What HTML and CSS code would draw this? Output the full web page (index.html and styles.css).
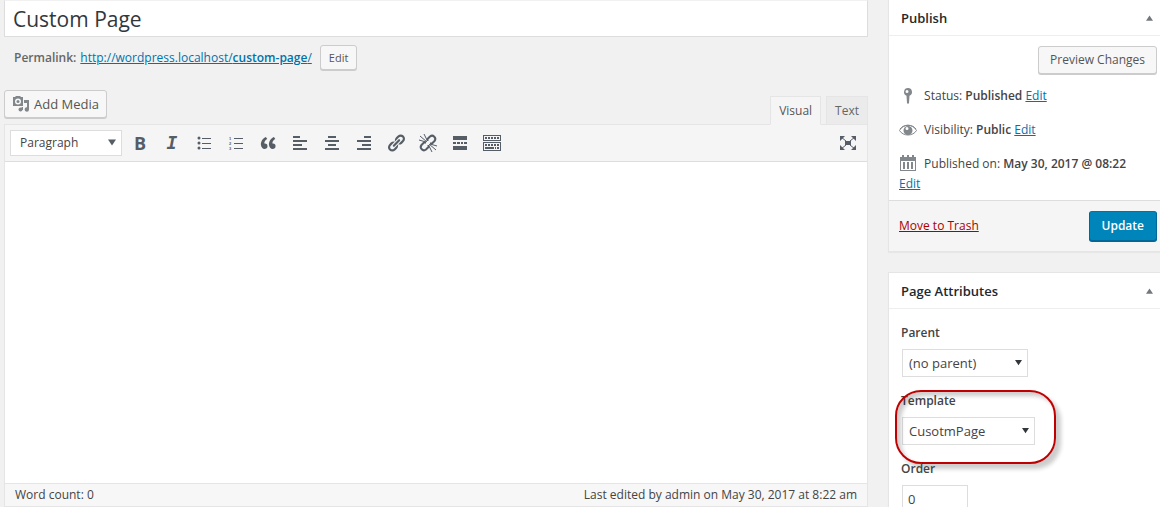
FILE: index.html
```
<!DOCTYPE html>
<html lang="en">
<head>
    <meta charset="UTF-8">
    <meta name="viewport" content="width=device-width, initial-scale=1.0">
    <title>Edit Page</title>
    <link rel="stylesheet" href="styles.css">
</head>
<body>
    <form class="page">
        <main class="main">
            <input type="text" class="title" value="Custom Page" aria-label="Title">

            <div class="permalink">
                <strong>Permalink:</strong>
                <a href="#">http://wordpress.localhost/<b>custom-page</b>/</a>
                <button type="button" class="button small">Edit</button>
            </div>

            <div class="editor-tools">
                <button type="button" class="button media">
                    <svg class="icon" viewBox="0 0 18 18">
                        <path fill-rule="evenodd" d="M1 2h2l1-1h4l1 1h2v9H1zM6 3.500a3 3 0 1 0 0 6 3 3 0 0 0 0-6z"/>
                        <circle cx="6" cy="6.500" r="1.500"/>
                        <path d="M12 5h5v9.500a2.200 2.200 0 1 1-2-2.200V8h-3z"/>
                        <circle cx="8.500" cy="14.500" r="2"/>
                        <path d="M9.500 12h1.500v3H9.500z"/>
                    </svg>
                    Add Media
                </button>
                <div class="tabs">
                    <button type="button" class="tab active">Visual</button>
                    <button type="button" class="tab">Text</button>
                </div>
            </div>

            <div class="editor">
                <div class="toolbar">
                    <div class="select format">
                        <select aria-label="Format"><option>Paragraph</option></select>
                        <svg class="arrow" viewBox="0 0 8 6"><path d="M0 0h8L4 6z"/></svg>
                    </div>
                    <button type="button" class="tool bold" aria-label="Bold">B</button>
                    <button type="button" class="tool italic" aria-label="Italic">I</button>
                    <button type="button" class="tool" aria-label="Bulleted list">
                        <svg viewBox="0 0 20 20"><circle cx="5" cy="5" r="1.500"/><circle cx="5" cy="10" r="1.500"/><circle cx="5" cy="15" r="1.500"/><path d="M8 5h9v1H8zM8 10h9v1H8zM8 15h9v1H8z"/></svg>
                    </button>
                    <button type="button" class="tool" aria-label="Numbered list">
                        <svg viewBox="0 0 20 20"><text x="3" y="7">1</text><text x="3" y="12">2</text><text x="3" y="17">3</text><path d="M8 5h9v1H8zM8 10h9v1H8zM8 15h9v1H8z"/></svg>
                    </button>
                    <button type="button" class="tool" aria-label="Blockquote">
                        <svg viewBox="0 0 20 20"><path d="M9.490 13.220c0-.740-.200-1.380-.610-1.900-.620-.780-1.830-.880-2.530-.720-.290-1.650 1.110-3.750 2.920-4.650L7.880 4c-2.730 1.300-5.420 4.280-4.960 8.050C3.210 14.430 4.590 16 6.540 16c.850 0 1.560-.250 2.120-.750s.830-1.180.830-2.030zm8.050 0c0-.740-.200-1.380-.610-1.900-.630-.780-1.830-.880-2.530-.720-.290-1.650 1.110-3.750 2.920-4.650L15.930 4c-2.730 1.300-5.410 4.280-4.950 8.050.290 2.380 1.660 3.950 3.610 3.950.850 0 1.560-.250 2.120-.750s.830-1.180.830-2.030z"/></svg>
                    </button>
                    <button type="button" class="tool" aria-label="Align left">
                        <svg viewBox="0 0 20 20"><path d="M3 3h7v2H3zM3 7h14v2H3zM3 11h9v2H3zM3 15h14v2H3z"/></svg>
                    </button>
                    <button type="button" class="tool" aria-label="Align center">
                        <svg viewBox="0 0 20 20"><path d="M6 3h8v2H6zM3 7h14v2H3zM6 11h8v2H6zM3 15h14v2H3z"/></svg>
                    </button>
                    <button type="button" class="tool" aria-label="Align right">
                        <svg viewBox="0 0 20 20"><path d="M10 3h7v2h-7zM3 7h14v2H3zM8 11h9v2H8zM3 15h14v2H3z"/></svg>
                    </button>
                    <button type="button" class="tool" aria-label="Insert link">
                        <svg viewBox="0 0 20 20"><path d="M17.740 2.760c1.680 1.690 1.680 4.410 0 6.100l-1.530 1.520c-1.120 1.120-2.700 1.470-4.140 1.090l2.620-2.610.760-.770.760-.760c.840-.840.840-2.200 0-3.040-.840-.850-2.200-.850-3.040 0l-.770.760-3.380 3.380c-.370-1.440-.020-3.020 1.100-4.140l1.520-1.530c1.690-1.680 4.420-1.680 6.100 0zM8.590 13.430l5.340-5.340c.420-.420.420-1.100 0-1.520-.440-.430-1.130-.390-1.530 0l-5.330 5.340c-.420.420-.420 1.100 0 1.520.440.430 1.130.390 1.520 0zm-.760 2.290l4.140-4.150c.380 1.440.030 3.020-1.090 4.140l-1.520 1.530c-1.690 1.680-4.410 1.680-6.100 0-1.680-1.680-1.680-4.420 0-6.100l1.530-1.520c1.120-1.120 2.700-1.470 4.140-1.100l-4.140 4.150c-.850.840-.850 2.200 0 3.050.840.840 2.200.840 3.040 0z"/></svg>
                    </button>
                    <button type="button" class="tool" aria-label="Remove link">
                        <svg viewBox="0 0 20 20">
                            <path class="line" d="M9.500 8V6l2.500-2.500a3.200 3.200 0 0 1 4.500 4.500L14 10.500h-2M10.500 12v2L8 16.500A3.200 3.200 0 0 1 3.500 12L6 9.500h2"/>
                            <path class="thin" d="M2 3l7 6M6 1l3 6M1 7l7 2M11 11l7 6M11 13l3 6M12 11l7 2"/>
                        </svg>
                    </button>
                    <button type="button" class="tool" aria-label="Read more">
                        <svg viewBox="0 0 20 20"><path d="M3 3h14v4H3zM3 13h14v4H3zM3 9h3v2H3zM7 9h3v2H7zM11 9h2v2h-2zM14 9h3v2h-3z"/></svg>
                    </button>
                    <button type="button" class="tool" aria-label="Toolbar toggle">
                        <svg viewBox="0 0 20 20">
                            <path fill-rule="evenodd" d="M1 2h18v6H1zM2 3v4h16V3zM1 9h18v9H1zM2 10v7h16v-7z"/>
                            <path d="M3 4h2v2H3zM6 4h2v2H6zM9 4h2v2H9zM12 4h2v2h-2zM15 4h2v2h-2zM3 11h2v2H3zM6 11h2v2H6zM9 11h2v2H9zM12 11h2v2h-2zM15 11h2v2h-2zM3 14h9v2H3zM13 14h1v2h-1zM15 14h2v2h-2z"/>
                        </svg>
                    </button>
                    <button type="button" class="tool fullscreen" aria-label="Distraction-free writing">
                        <svg viewBox="0 0 20 20">
                            <path d="M7 8h6v4H7zM2 3h5L2 8zM18 3v5l-5-5zM2 17v-5l5 5zM18 17h-5l5-5z"/>
                            <path class="thin" d="M3 4l5 4M17 4l-5 4M3 16l5-4M17 16l-5-4"/>
                        </svg>
                    </button>
                </div>
                <textarea class="content" aria-label="Content"></textarea>
                <div class="status">
                    <span>Word count: 0</span>
                    <span>Last edited by admin on May 30, 2017 at 8:22 am</span>
                </div>
            </div>
        </main>

        <aside class="side">
            <section class="box publish">
                <div class="box-header">
                    <h2>Publish</h2>
                    <svg class="toggle" viewBox="0 0 8 6"><path d="M4 0l4 6H0z"/></svg>
                </div>
                <div class="preview">
                    <button type="button" class="button">Preview Changes</button>
                </div>
                <div class="misc">
                    <p>
                        <svg class="icon" viewBox="0 0 20 20"><path fill-rule="evenodd" d="M9 2a4 4 0 0 1 1.500 7.700L10 17l-1 1-1-1-.500-7.300A4 4 0 0 1 9 2zM8 4a1.500 1.500 0 1 0 0 3 1.500 1.500 0 0 0 0-3z"/></svg>
                        Status: <b>Published</b> <a href="#">Edit</a>
                    </p>
                    <p>
                        <svg class="icon" viewBox="0 0 20 20">
                            <path class="thin" d="M.500 10.500C4 3.500 14 3.500 17.500 10.500 14 16.500 4 16.500.500 10.500z"/>
                            <path class="thin" d="M1 9C5 4 13 4 17 9"/>
                            <path fill-rule="evenodd" d="M9 6a4.500 4.500 0 1 1 0 9 4.500 4.500 0 0 1 0-9zM8 7a1.500 1.500 0 1 0 0 3 1.500 1.500 0 0 0 0-3z"/>
                        </svg>
                        Visibility: <b>Public</b> <a href="#">Edit</a>
                    </p>
                    <p>
                        <svg class="icon" viewBox="0 0 20 20"><path fill-rule="evenodd" d="M1 3h2V1h2v2h3V1h2v2h3V1h2v2h2v14H1zM2 7v9h14V7zM4 8h2v7H4zM8 8h2v7H8zM12 8h2v7h-2z"/></svg>
                        Published on: <b>May 30, 2017 @ 08:22</b> <a href="#">Edit</a>
                    </p>
                </div>
                <div class="actions">
                    <a href="#" class="trash">Move to Trash</a>
                    <button type="submit" class="button primary">Update</button>
                </div>
            </section>

            <section class="box">
                <div class="box-header">
                    <h2>Page Attributes</h2>
                    <svg class="toggle" viewBox="0 0 8 6"><path d="M4 0l4 6H0z"/></svg>
                </div>
                <div class="fields">
                    <div class="field">
                        <label for="parent">Parent</label>
                        <div class="select parent">
                            <select id="parent"><option>(no parent)</option></select>
                            <svg class="arrow" viewBox="0 0 8 6"><path d="M0 0h8L4 6z"/></svg>
                        </div>
                    </div>
                    <div class="field marked">
                        <label for="template">Template</label>
                        <div class="select template">
                            <select id="template"><option>CusotmPage</option></select>
                            <svg class="arrow" viewBox="0 0 8 6"><path d="M0 0h8L4 6z"/></svg>
                        </div>
                    </div>
                    <div class="field">
                        <label for="order">Order</label>
                        <input type="text" id="order" class="order" value="0">
                    </div>
                </div>
            </section>
        </aside>
    </form>
</body>
</html>
```
FILE: styles.css
```
*,
*::after {
    box-sizing: border-box;
}

body {
    margin: 0;
    background-color: #f1f1f1;
    color: #444;
    font-family: "Open Sans", "Noto Sans", sans-serif;
    font-size: 12px;
    line-height: 20px;
    overflow: hidden;
}

button,
input,
select,
textarea {
    font: inherit;
    color: inherit;
}

button {
    cursor: pointer;
}

a {
    color: #0073aa;
}

b,
strong,
label {
    font-weight: 600;
}

svg {
    fill: currentColor;
}

.line,
.thin {
    fill: none;
    stroke: currentColor;
}

.line {
    stroke-width: 2;
}

.icon {
    width: 20px;
    height: 20px;
    color: #82878c;
}

.page {
    display: grid;
    grid-template-columns: 1fr 272px;
    gap: 20px;
    height: 100vh;
    padding-left: 4px;
}

/* Editor column */
.main {
    display: flex;
    flex-direction: column;
    height: 100vh;
    min-width: 0;
}

.title {
    width: 100%;
    height: 37px;
    padding: 0 8px;
    border: 1px solid #ddd;
    border-top-color: #f1f1f1;
    background-color: #fff;
    color: #32373c;
    font-size: 21px;
}

.permalink {
    display: flex;
    align-items: center;
    gap: 4px;
    margin-top: 8px;
    padding-left: 10px;
    color: #666;
}

.button {
    height: 28px;
    padding: 0 11px;
    border: 1px solid #ccc;
    border-radius: 3px;
    background-color: #f7f7f7;
    box-shadow: 0 1px 0 #ccc;
    color: #555;
    line-height: 26px;
    white-space: nowrap;
}

.button.small {
    height: 25px;
    margin-left: 4px;
    padding: 0 8px;
    font-size: 11px;
    line-height: 22px;
}

.button.primary {
    height: 30px;
    padding: 0 12px;
    border-color: #0073aa #006799 #006799;
    background-color: #0085ba;
    box-shadow: 0 1px 0 #006799;
    color: #fff;
    font-weight: 600;
}

.editor-tools {
    display: flex;
    justify-content: space-between;
    align-items: flex-start;
    height: 34px;
    margin-top: 20px;
}

.button.media {
    display: flex;
    align-items: center;
    gap: 4px;
    padding: 0 7px;
    font-size: 13px;
}

.button.media .icon {
    width: 18px;
    height: 18px;
}

.tabs {
    display: flex;
    align-self: flex-end;
    gap: 5px;
    margin-bottom: -1px;
}

.tab {
    position: relative;
    height: 29px;
    padding: 0 8px;
    border: 1px solid #e5e5e5;
    background-color: #ebebeb;
    color: #666;
}

.tab.active {
    border-bottom-color: #f5f5f5;
    background-color: #f5f5f5;
    color: #555;
}

.editor {
    display: flex;
    flex: 1;
    flex-direction: column;
    border: 1px solid #e5e5e5;
}

.toolbar {
    display: flex;
    align-items: center;
    gap: 4px;
    height: 37px;
    padding: 0 5px;
    border-bottom: 1px solid #ddd;
    background-color: #f5f5f5;
}

.select {
    position: relative;
    height: 28px;
}

.select select {
    appearance: none;
    width: 100%;
    height: 100%;
    padding: 0 6px;
    border: 1px solid #ddd;
    border-radius: 0;
    background-color: #fff;
    font-size: 13px;
}

.arrow {
    position: absolute;
    top: 50%;
    right: 6px;
    width: 7px;
    height: 7px;
    margin-top: -4px;
    color: #32373c;
    pointer-events: none;
}

.select.format {
    width: 112px;
    height: 26px;
}

.format select {
    padding: 0 9px;
    font-size: 12px;
}

.format .arrow {
    width: 8px;
    color: #555d66;
}

.tool {
    display: flex;
    justify-content: center;
    align-items: center;
    width: 28px;
    height: 28px;
    padding: 0;
    border: 0;
    background: none;
    color: #555d66;
}

.tool svg {
    width: 20px;
    height: 20px;
}

.tool text {
    font-family: "Liberation Sans", sans-serif;
    font-size: 4px;
    font-weight: 700;
}

.tool.bold {
    font-size: 18px;
    font-weight: 700;
}

.tool.italic {
    font-family: "DejaVu Sans Mono", monospace;
    font-size: 18px;
    font-style: italic;
    font-weight: 700;
}

.tool.fullscreen {
    margin-left: auto;
}

.content {
    flex: 1;
    width: 100%;
    padding: 10px;
    border: 0;
    background-color: #fff;
    resize: none;
}

.status {
    display: flex;
    justify-content: space-between;
    height: 23px;
    padding: 1px 10px;
    border-top: 1px solid #e5e5e5;
    background-color: #f7f7f7;
}

/* Sidebar */
.side {
    display: flex;
    flex-direction: column;
    gap: 20px;
}

.box {
    border: 1px solid #e5e5e5;
    border-right: 0;
    background-color: #fff;
    box-shadow: 0 1px 1px rgba(0, 0, 0, 0.04);
}

.publish {
    border-top: 0;
}

.box-header {
    display: flex;
    justify-content: space-between;
    align-items: center;
    height: 36px;
    padding: 0 7px 0 12px;
    border-bottom: 1px solid #eee;
}

.box-header h2 {
    margin: 0;
    color: #23282d;
    font-size: 13px;
    font-weight: 600;
}

.toggle {
    width: 7px;
    height: 6px;
    color: #72777c;
}

.preview {
    display: flex;
    justify-content: flex-end;
    padding: 10px 3px 12px;
}

.misc {
    padding: 0 10px 6px;
}

.misc p {
    margin: 0 0 14px;
}

.misc p:last-child {
    margin: 0;
}

.misc .icon {
    margin-right: 2px;
    vertical-align: top;
}

.actions {
    display: flex;
    justify-content: space-between;
    align-items: center;
    height: 51px;
    padding: 0 3px 0 10px;
    border-top: 1px solid #ddd;
    background-color: #f5f5f5;
}

.trash {
    color: #a00;
}

.fields {
    display: flex;
    flex-direction: column;
    gap: 14px;
    padding: 14px 12px;
}

.field {
    position: relative;
}

.field label {
    display: block;
    margin-bottom: 6px;
}

.field .select,
.order {
    margin-left: 1px;
}

.select.parent {
    width: 126px;
}

.select.template {
    width: 133px;
}

.order {
    width: 66px;
    height: 28px;
    padding: 0 5px;
    border: 1px solid #ddd;
    background-color: #fff;
    font-size: 13px;
}

/* Red ring around the template field */
.marked::after {
    content: "";
    position: absolute;
    top: -1px;
    left: -6px;
    width: 161px;
    height: 74px;
    border: 2px solid #c00000;
    border-radius: 26px;
    box-shadow: 5px 5px 4px rgba(0, 0, 0, 0.2), inset 4px 4px 4px rgba(0, 0, 0, 0.2);
    pointer-events: none;
}
```
